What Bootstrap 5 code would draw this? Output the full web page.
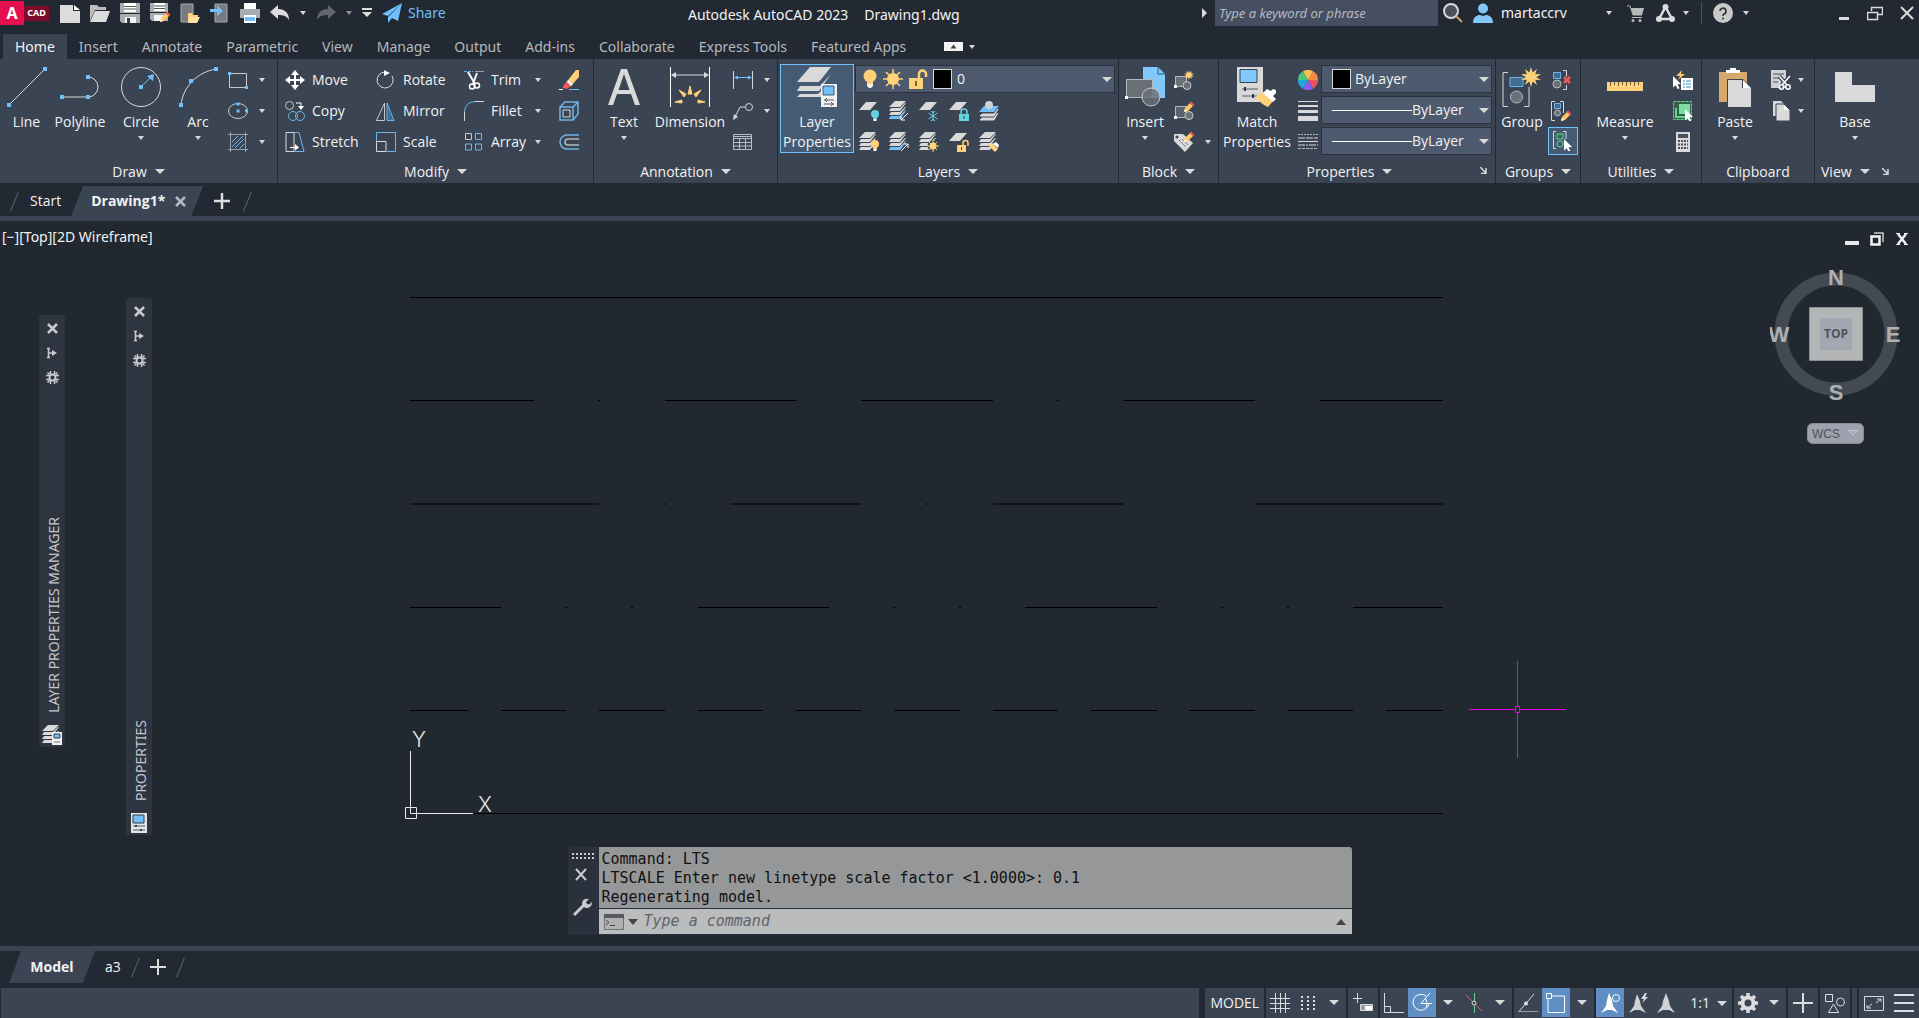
<!DOCTYPE html>
<html lang="en">
<head>
<meta charset="utf-8">
<meta name="viewport" content="width=device-width, initial-scale=1">
<title>Autodesk AutoCAD 2023 - Drawing1.dwg</title>
<link rel="stylesheet" href="https://cdn.jsdelivr.net/npm/bootstrap@5.3.0/dist/css/bootstrap.min.css">
<style>
:root{--ink:#222933;--sheet:#212830;--panel:#3b4453;--field:#4d5a6e;--edge:#2a323f;--hi:#6fc0fb;--on:#5f8fc3}
body{background:var(--ink);color:#f2f2f2;font:14px/20px "Open Sans","Noto Sans",sans-serif;overflow:hidden}
svg{display:block;flex:none}
.s20{width:20px;height:20px}.s40{width:40px;height:40px}
.plain{color:inherit;font-size:14px;line-height:20px;padding:0;border:0;border-radius:0;background:none;white-space:nowrap}
.plain:hover{color:#fff}
.tri{width:0;height:0;border:3px solid transparent;border-top:4px solid #d9d9d9;border-bottom:0;flex:none}
.tri.wide{border-left-width:5px;border-right-width:5px;border-top-width:5px}
.tri.dim{border-top-color:#8b8f96}
.top-row,.menu-row,.view-tag,.dock{font-family:"Noto Sans","Open Sans",sans-serif}
.top-row{height:34px}
.top-row .bar-in{height:26px}
.logo-a{width:24px;height:24px;background:#e51050;font-weight:700;font-size:16px;line-height:20px}
.logo-cad{height:15px;width:25px;background:#7c0b2c;font-size:9px;font-weight:700}
.quick{gap:10px;padding-left:11px}
.share{gap:6px;color:var(--hi)}
.doc-title{gap:16px}
.find{width:223px;height:26px;background:#454f61;border:0;color:#d0d2d6;font-style:italic;font-size:13px;padding:0 4px}
.find::placeholder{color:#b5b9c0}
.who{width:105px}
.i-user{margin:0 8px 0 10px}
.i-cart{margin:0 12px 0 15px}
.split{width:1px;height:22px;background:#4a5364;margin:0 11px 0 12px}
.help-tri{margin:0 90px 0 10px}
.i-restore{margin:0 17px 0 18px}
.i-close{margin-right:5px}
.menu-row{height:25px;padding-left:3px}
.menu-row a{color:#b5b8bd;text-decoration:none;padding:0 12px;height:25px;line-height:25px}
.menu-row a.on{background:var(--panel);color:#f2f2f2}
.i-fold{margin:0 6px 0 26px}
.ribbon{background:var(--panel);height:124px}
.pane{border-right:1px solid var(--ink);flex:none}
.pane:last-child{border:0;flex:1}
.tools{display:grid;grid-auto-flow:column;grid-template-rows:repeat(3,31px);padding-top:5px}
.pane-name{height:26px;padding-top:3px}
.pane-left{padding-left:6px}
.big{grid-row:1/span 3;display:flex;flex-direction:column;align-items:center;padding-top:3px}
.big svg{margin-bottom:5px}
.big .tri{margin-top:4px}
.big .combo svg,.big .lay-row svg{margin-bottom:0}
.big .combo .tri{margin-top:0}
.big.on{height:89px;width:74px;margin-left:2px;padding-top:2px;background:#455b74;border:1px solid var(--hi)}
.sm{display:flex;align-items:center;gap:7px;padding-left:7px;height:31px}
.sm.near{padding-left:3px}
.sm.mid{padding-left:0;justify-content:center}
.sm .end{margin-left:auto;margin-right:11px}
.sm.on{width:30px;height:28px;margin:1px 0 0 1px;background:#455b74;border:1px solid var(--hi)}
.t-draw{grid-template-columns:53px 54px 68px 46px 56px}
.t-modify{grid-template-columns:91px 88px 95px 41px}
.t-annot{grid-template-columns:60px 72px 51px}
.t-layers{grid-template-columns:77px 263px}
.t-block{grid-template-columns:52px 47px}
.t-props{grid-template-columns:76px 26px 174px}
.t-groups{grid-template-columns:52px 32px}
.t-util{grid-template-columns:88px 32px}
.t-util .sm{width:28px}
.t-clip{grid-template-columns:66px 46px}
.t-view{grid-template-columns:80px}
.combo{height:28px;margin:1px 3px 2px 0;background:var(--field);border:1px solid var(--edge);padding:0 2px 0 6px}
.combo select{appearance:none;background:none;border:0;color:#f2f2f2;flex:1;min-width:0;padding:0;outline:0}
.combo option{color:#000}
.combo.icons{gap:5px}
.swatch{width:19px;height:20px;background:#000;border:1px solid #d9d9d9;flex:none}
.rule{width:80px;height:1px;background:#fff;flex:none}
.lay-row{height:31px;gap:10px;padding-left:4px}
.file-row{height:33px}
.file-part{height:30px;padding-left:14px}
.file-part a{padding:0 10px 0 15px}
.file-add{height:30px;padding-left:11px;gap:17px}
.slash{width:1px;height:21px;background:#59606c;transform:rotate(22deg)}
.file-tab{height:30px;width:132px;background:var(--panel);clip-path:polygon(9% 0,100% 0,91% 100%,0 100%);font-weight:700;padding-left:20px;gap:10px}
.strip{height:5px;background:var(--panel)}
.board{background:var(--sheet);min-height:0}
.board-svg{left:0;top:0;width:100%;height:100%}
.view-tag{left:2px;top:6px;font-size:14px;line-height:20px}
.dock{width:26px;background:#2e3440;border-radius:3px;color:#c3c6cb}
.dock-a{left:39px;top:94px;height:432px}
.dock-b{left:126px;top:77px;height:537px}
.dock .gl{gap:11px;padding-top:6px}
.dock .nm{writing-mode:vertical-rl;transform:rotate(180deg);line-height:20px;margin:auto 0 12px 3px}
.dock>svg{margin-bottom:2px}
.board-ctl{right:10px;top:11px;gap:11px}
.cube{right:17px;top:44px;width:132px;height:182px}
.cli{left:50%;bottom:11px;width:784px;margin-left:-392px;padding-bottom:1px;background:#2a303c;border-radius:3px}
.cli-side{width:31px;padding:6px 0 0 4px}
.cli-text{font:15px/19px "DejaVu Sans Mono",monospace;color:#111}
.cli-log{background:#969798;height:61px;padding:3px 3px 1px;border-top-right-radius:3px}
.cli-in{background:#bbbcbe;height:25px;margin-top:1px;padding:0 6px 0 5px}
.cli-in input{background:none;border:0;outline:0;font:italic 15px/19px "DejaVu Sans Mono",monospace;padding:0;margin-left:6px}
.cli-in input::placeholder{color:#626468}
.sheet-row{height:37px}
.sheet-tab{width:86px;height:32px;margin-left:9px;background:var(--panel);clip-path:polygon(14% 0,100% 0,86% 100%,0 100%);font-weight:700}
.sheet-part{height:32px;padding-left:10px;gap:14px}
.status{height:30px;gap:2px;padding-left:1px}
.seg{background:var(--panel)}
.seg.model{width:59px}
.seg.sliver{width:5px}
.scale{padding:0 5px 0 10px;gap:7px}
.st{width:28px;height:29px;display:flex;align-items:center;justify-content:center}
.st.on{background:var(--on)}
.st.car{width:24px}
.st.lone{width:30px;height:30px}
</style>
</head>
<body class="d-flex flex-column vh-100">

<svg width="0" height="0" class="position-absolute" aria-hidden="true">
 <defs>
  <g id="stack" fill="#d9d9d9"><path d="M6 0h11l-6 6H0z"/><path d="M2 7h9l5-5h1l-6 8H0z"/><path d="M2 11h9l5-5h1l-6 8H0z"/><path d="M2 15h9l4-4h1l-5 7H0z"/></g>
  <g id="leaf"><path d="M7 1h11l-7 8H0z" fill="#d9d9d9"/></g>
  <g id="bulb"><circle cx="4" cy="4" r="4"/><path d="M2 7h4v2H2z"/><path d="M2.500 9h3v2h-3z" fill="#fff"/></g>
  <g id="burst"><path d="M10 0l1.700 5.500L16 2l-1.800 5.200L20 7l-4.700 3.200L20 13l-5.800-.2L16 18l-4.300-3.500L10 20l-1.700-5.500L4 18l1.800-5.200L0 13l4.700-2.800L0 7l5.800.2L4 2l4.300 3.500z" fill="#ffd279"/></g>
  <g id="pencil"><path d="M0 9l1-4 5-5 3 3-5 5z" fill="#ffc766"/><path d="M6 0l1-1 3 3-1 1z" fill="#f0565a" stroke="#f0565a"/><path d="M0 9l1-3 2 2z" fill="#fff"/></g>
  <g id="arrow"><path d="M0 0l8 8-3.500.3 2 4-1.800.9-2-4L0 11.500z" fill="#fff"/></g>
  <g id="gearsm" fill="none" stroke="#c9cbd0"><circle cx="6.500" cy="6.500" r="3" stroke-width="2"/><path d="M4.500 0v3M8.500 0v3M4.500 10v3M8.500 10v3M0 4.500h3M0 8.500h3M10 4.500h3M10 8.500h3M1.500 1.500l2 2M9.500 9.500l2 2M11.500 1.500l-2 2M3.500 9.500l-2 2" stroke-width="1.500"/></g>
  <g id="sheetprop"><path d="M0 0h16v20H0z" fill="#e4e4e4"/><path d="M2 2h11v8H2z" fill="#6fc0fb" stroke="#333b48"/><path d="M2 13h12M2 17h12" stroke="#555c68"/><path d="M5 12v2M10 16v2" stroke="#333b48" stroke-width="2"/></g>
 </defs>
</svg>

<header class="top-row">
 <div class="bar-in d-flex align-items-center">
  <button class="btn plain d-flex align-items-center" aria-label="Application menu"><span class="logo-a d-flex align-items-center justify-content-center text-white">A</span><span class="logo-cad d-flex align-items-center justify-content-center text-white">CAD</span></button>
  <nav class="quick d-flex align-items-center" aria-label="Quick access">
   <svg class="s20" viewBox="0 0 20 20"><path d="M0 2h13v6h7v12H0z" fill="#dcdcdc"/><path d="M14 2l6 5h-6z" fill="#fff"/></svg>
   <svg class="s20" viewBox="0 0 20 20"><path d="M0 2h7l2 2h7v3H5L0 18z" fill="#bdbdbd"/><path d="M5 8h15l-4 11H0z" fill="#dcdcdc"/></svg>
   <svg class="s20" viewBox="0 0 20 20"><path d="M0 0h20v20H2l-2-2z" fill="#a9acb1"/><path d="M4 0h12v9H4z" fill="#fff"/><path d="M4 3.500h12M4 6h12" stroke="#555"/><path d="M0 10.500h20" stroke="#222933"/><path d="M5 14h11v6H5z" fill="#f4f4f4"/><path d="M7 15h3v5H7z" fill="#333b48"/></svg>
   <svg class="s20" viewBox="0 0 20 20"><path d="M0 0h18v18H2l-2-2z" fill="#a9acb1"/><path d="M4 0h11v8H4z" fill="#fff"/><path d="M4 3h11M4 5.500h11" stroke="#555"/><path d="M0 9.500h18" stroke="#222933"/><path d="M4 12h9v6H4z" fill="#f4f4f4"/><use href="#pencil" x="10" y="10"/></svg>
   <svg class="s20" viewBox="0 0 20 20"><path d="M1 1h12v18H1z" fill="#777b80" stroke="#a9acb1"/><path d="M8 10h4l1 2h5v7H8z" fill="#ffd279"/><path d="M10 14h10l-3 6H8z" fill="#ffe1a0"/></svg>
   <svg class="s20" viewBox="0 0 20 20"><path d="M5 1h12v18H5z" fill="#777b80" stroke="#a9acb1"/><path d="M0 6h7V2l6 6-6 5V9H0z" fill="#6fc0fb"/></svg>
   <svg class="s20" viewBox="0 0 20 20"><path d="M4 0h12v7H4z" fill="#fff"/><path d="M0 6h20v9H0z" fill="#a9acb1"/><path d="M4 12h12v8H4z" fill="#fff"/><path d="M5 14h10v4H5z" fill="#6fc0fb"/></svg>
   <svg class="s20" viewBox="0 0 20 20"><path d="M0 9l8-7v4c7 0 11 4 11 11-2-4-6-5-11-5v4z" fill="#dcdcdc"/></svg>
   <span class="tri"></span>
   <svg class="s20" viewBox="0 0 20 20"><path d="M20 9l-8-7v4C5 6 1 10 1 17c2-4 6-5 11-5v4z" fill="#62676e"/></svg>
   <span class="tri dim"></span>
   <svg width="10" height="14" viewBox="0 0 10 14"><path d="M0 3h10" stroke="#dcdcdc" stroke-width="2"/><path d="M0 6h10l-5 5z" fill="#dcdcdc"/></svg>
   <button class="btn plain share d-flex align-items-center"><svg class="s20" viewBox="0 0 20 20"><path d="M20 0L0 11l6 2zM20 0L8 14l8 4zM20 0L6 14v6l4-5z" fill="#6fc0fb"/></svg>Share</button>
  </nav>
  <div class="doc-title mx-auto d-flex pt-1"><span>Autodesk AutoCAD 2023</span><span>Drawing1.dwg</span></div>
  <div class="d-flex align-items-center">
   <svg width="5" height="10" viewBox="0 0 5 10" class="me-2"><path d="M0 0l5 5-5 5z" fill="#dcdcdc"/></svg>
   <input class="find" type="search" placeholder="Type a keyword or phrase" aria-label="Type a keyword or phrase">
   <svg class="ms-1" width="21" height="20" viewBox="0 0 21 20"><circle cx="9" cy="8" r="7" fill="#4a515c" stroke="#d9d9d9" stroke-width="2"/><path d="M14 13l6 6" stroke="#c9a070" stroke-width="2"/></svg>
   <svg class="s20 i-user" viewBox="0 0 20 20"><circle cx="10" cy="5.500" r="5" fill="#82c8fb"/><path d="M0 20c0-6 4-8 7-8l3 1 3-1c3 0 7 2 7 8z" fill="#82c8fb"/></svg>
   <span class="who">martaccrv</span><span class="tri"></span>
   <svg class="i-cart" width="17" height="17" viewBox="0 0 17 17"><path d="M0 1h3l3 9h9" fill="none" stroke="#b9b9b9"/><path d="M4 3h13l-2 7H6z" fill="#b9b9b9"/><path d="M5 12.500h10" stroke="#b9b9b9"/><circle cx="6" cy="15.500" r="1.500" fill="#b9b9b9"/><circle cx="13" cy="15.500" r="1.500" fill="#b9b9b9"/></svg>
   <svg width="19" height="18" viewBox="0 0 19 18"><path d="M9.500 3L3 15h13z" fill="none" stroke="#dcdcdc" stroke-width="2.500"/><g fill="#dcdcdc"><circle cx="9.500" cy="3" r="3"/><circle cx="3" cy="15" r="3"/><circle cx="16" cy="15" r="3"/></g></svg>
   <span class="tri ms-2"></span>
   <span class="split"></span>
   <svg class="s20" viewBox="0 0 20 20"><circle cx="10" cy="10" r="10" fill="#c9c9c9"/><path d="M7 8a3 3 0 1 1 4 3q-1 .5-1 2M10 14.500v2" fill="none" stroke="#333" stroke-width="1.600"/></svg>
   <span class="tri help-tri"></span>
   <svg width="10" height="14" viewBox="0 0 10 14"><path d="M0 11h10v3H0z" fill="#dcdcdc"/></svg>
   <svg class="i-restore" width="16" height="15" viewBox="0 0 16 15"><path d="M4.500 5V1.500h11v7H11M.5 6.500h10v7H.5z" fill="none" stroke="#dcdcdc" stroke-width="1.500"/></svg>
   <svg class="i-close" width="14" height="14" viewBox="0 0 14 14"><path d="M1 1l12 12M13 1L1 13" stroke="#dcdcdc" stroke-width="2"/></svg>
  </div>
 </div>
</header>

<nav class="menu-row d-flex align-items-center" aria-label="Ribbon tabs">
 <a class="on" href="#">Home</a><a href="#">Insert</a><a href="#">Annotate</a><a href="#">Parametric</a><a href="#">View</a><a href="#">Manage</a><a href="#">Output</a><a href="#">Add-ins</a><a href="#">Collaborate</a><a href="#">Express Tools</a><a href="#">Featured Apps</a>
 <svg class="i-fold" width="19" height="9" viewBox="0 0 19 9"><path d="M0 0h19v9H0z" fill="#f4f4f4"/><path d="M6.500 6.500h6l-3-4z" fill="#444"/></svg><span class="tri"></span>
</nav>

<section class="ribbon d-flex">
 <div class="pane">
  <div class="tools t-draw">
   <button class="btn plain big"><svg class="s40" viewBox="0 0 40 40"><path d="M2 38L38 2" stroke="#d9d9d9"/><path d="M0 36h4v4H0zM36 0h4v4h-4z" fill="#6fc0fb"/></svg>Line</button>
   <button class="btn plain big"><svg class="s40" viewBox="0 0 40 40"><path d="M2 30h26a10 10 0 0 0 0-20" fill="none" stroke="#d9d9d9"/><path d="M0 28h4v4H0zM26 28h4v4h-4zM26 8h4v4h-4z" fill="#6fc0fb"/></svg>Polyline</button>
   <button class="btn plain big"><svg class="s40" viewBox="0 0 40 40"><circle cx="20" cy="20" r="19.500" fill="none" stroke="#d9d9d9"/><path d="M20 20l11-11" stroke="#6fc0fb"/><path d="M18 18h4v4h-4zM33 7l-1 7-6-5z" fill="#6fc0fb"/></svg>Circle<span class="tri"></span></button>
   <button class="btn plain big"><svg class="s40" viewBox="0 0 40 40"><path d="M3 38C5 19 20 5 38 2" fill="none" stroke="#d9d9d9"/><path d="M1 36h4v4H1zM11 12h4v4h-4zM36 0h4v4h-4z" fill="#6fc0fb"/></svg>Arc<span class="tri"></span></button>
   <button class="btn plain sm" aria-label="Rectangle"><svg class="s20" viewBox="0 0 20 20"><path d="M1 3.500h17.500v14H1.500V3" fill="none" stroke="#c9c9c9"/><path d="M0 2h3v3H0zM17 16h3v3h-3z" fill="#6fc0fb"/></svg><span class="tri ms-1"></span></button>
   <button class="btn plain sm" aria-label="Ellipse"><svg class="s20" viewBox="0 0 20 20"><ellipse cx="10" cy="10" rx="9.500" ry="7.500" fill="none" stroke="#c9c9c9"/><path d="M8.500 1.500h3v3h-3zM8.500 8.500h3v3h-3zM17 8.500h3v3h-3z" fill="#6fc0fb"/></svg><span class="tri ms-1"></span></button>
   <button class="btn plain sm" aria-label="Hatch"><svg class="s20" viewBox="0 0 20 20"><path d="M2.500 0v20M17.500 0v20M0 2.500h20M0 17.500h20" stroke="#9ba1aa"/><path d="M4 10l6-6M4 15L15 4M7 16l9-9M12 16l4-4" stroke="#6fc0fb"/></svg><span class="tri ms-1"></span></button>
  </div>
  <button class="btn plain pane-name w-100 d-flex justify-content-center align-items-center gap-2">Draw <span class="tri wide"></span></button>
 </div>

 <div class="pane">
  <div class="tools t-modify">
   <button class="btn plain sm"><svg class="s20" viewBox="0 0 20 20"><path d="M10 2v16M2 10h16" stroke="#fff" stroke-width="2"/><path d="M10 0l4 5H6zM10 20l4-5H6zM0 10l5-4v8zM20 10l-5-4v8z" fill="#fff"/></svg>Move</button>
   <button class="btn plain sm"><svg class="s20" viewBox="0 0 20 20"><circle cx="4.500" cy="4.500" r="4" fill="none" stroke="#c9c9c9"/><circle cx="8" cy="15" r="4.500" fill="none" stroke="#6fb4e6"/><circle cx="15" cy="15" r="4.500" fill="none" stroke="#6fb4e6"/><path d="M11 2h5v5" fill="none" stroke="#fff"/><path d="M13 5h6l-3 4z" fill="#fff"/></svg>Copy</button>
   <button class="btn plain sm"><svg class="s20" viewBox="0 0 20 20"><path d="M1 .5h8v19H1z" fill="none" stroke="#d9d9d9"/><path d="M9 .5h5l5 19H9" fill="none" stroke="#6fb4e6"/><path d="M5 15.500h6" stroke="#fff"/><path d="M10 12l4 3.500-4 3z" fill="#fff"/></svg>Stretch</button>
   <button class="btn plain sm"><svg class="s20" viewBox="0 0 20 20"><path d="M16 6a8 8 0 1 1-7-4" fill="none" stroke="#d9d9d9"/><path d="M8 0l6 3-6 3z" fill="#fff"/></svg>Rotate</button>
   <button class="btn plain sm"><svg class="s20" viewBox="0 0 20 20"><path d="M8.500 2v17.500H.5z" fill="none" stroke="#c9c9c9"/><path d="M11 2v17.500H18z" fill="#3f6d92" stroke="#6fb4e6"/></svg>Mirror</button>
   <button class="btn plain sm"><svg class="s20" viewBox="0 0 20 20"><path d="M.5 9V.5h19v19H11" fill="none" stroke="#6fb4e6"/><path d="M.5 9.500h9.500v10H.5z" fill="none" stroke="#d9d9d9"/></svg>Scale</button>
   <button class="btn plain sm"><svg class="s20" viewBox="0 0 20 20"><path d="M0 1.500h9" stroke="#6fb4e6" stroke-dasharray="3 1"/><path d="M11 1.500h9" stroke="#9ba1aa"/><path d="M4 2l7 12M13 3L9 14" stroke="#fff" stroke-width="2"/><circle cx="8" cy="16.500" r="2.500" fill="none" stroke="#fff" stroke-width="1.500"/><circle cx="13" cy="15.500" r="2.500" fill="none" stroke="#fff" stroke-width="1.500"/></svg>Trim<span class="tri end"></span></button>
   <button class="btn plain sm"><svg class="s20" viewBox="0 0 20 20"><path d="M.5 20v-9" stroke="#d9d9d9"/><path d="M.5 11Q1 1 11 .5" fill="none" stroke="#6fb4e6"/><path d="M11 .5h9" stroke="#d9d9d9"/></svg>Fillet<span class="tri end"></span></button>
   <button class="btn plain sm"><svg class="s20" viewBox="0 0 20 20"><path d="M1.500 1.500h6v6h-6z" fill="none" stroke="#c9c9c9"/><path d="M11.500 1.500h6v6h-6zM1.500 12h6v6h-6zM11.500 12h6v6h-6z" fill="none" stroke="#6fb4e6"/></svg>Array<span class="tri end"></span></button>
   <button class="btn plain sm" aria-label="Erase"><svg class="s20" viewBox="0 0 20 20"><path d="M20 0v7l-9 10-5-3L17 0z" fill="#ffd279"/><path d="M8 11l5 4-5 4-4-1v-2z" fill="#f0565a"/><path d="M9 10l5 4-2 2-4-4z" fill="#fff"/><path d="M0 19.500h4" stroke="#fff"/><path d="M10 19.500h10" stroke="#6fc0fb"/></svg></button>
   <button class="btn plain sm" aria-label="Solid edit"><svg class="s20" viewBox="0 0 20 20"><path d="M1 6h13v13H1zM1 6l5-5h13l-5 5M19 1v12l-5 6" fill="none" stroke="#6fb4e6" stroke-width="1.500"/><path d="M4 9h7v7H4z" fill="none" stroke="#d9d9d9"/></svg></button>
   <button class="btn plain sm" aria-label="Offset"><svg class="s20" viewBox="0 0 20 20"><path d="M20 3H8a7 7 0 0 0 0 14h12" fill="none" stroke="#6fb4e6" stroke-width="1.500"/><path d="M20 7H9a3 3 0 0 0 0 6h11" fill="none" stroke="#b5b8bd" stroke-width="1.500"/></svg></button>
  </div>
  <button class="btn plain pane-name w-100 d-flex justify-content-center align-items-center gap-2">Modify <span class="tri wide"></span></button>
 </div>

 <div class="pane">
  <div class="tools t-annot">
   <button class="btn plain big"><svg class="s40" viewBox="0 0 40 40"><path d="M4 38L17 2h6l13 36h-5l-4-11H13L9 38zM14.500 23h11L20 7z" fill="#d9d9d9"/></svg>Text<span class="tri"></span></button>
   <button class="btn plain big"><svg class="s40" viewBox="0 0 40 40"><path d="M.5 0v40M39.500 0v40" stroke="#fff"/><path d="M2 8h36" stroke="#d9d9d9"/><path d="M1 8l5-3v6zM39 8l-5-3v6z" fill="#d9d9d9"/><g fill="#ffd279"><path d="M18 27l2-8 2 8zM14 30l-5-7 7 4zM26 30l5-7-7 4zM12 36l-7-1 7-2zM28 36l7-1-7-2z" stroke="#ffd279"/></g></svg>Dimension</button>
   <button class="btn plain sm" aria-label="Linear"><svg class="s20" viewBox="0 0 20 20"><path d="M.5 1v18M19.500 1v18" stroke="#d9d9d9"/><path d="M2 7.500h16" stroke="#6fc0fb"/><path d="M1 7.500l4-2v4zM19 7.500l-4-2v4z" fill="#6fc0fb"/></svg><span class="tri ms-1"></span></button>
   <button class="btn plain sm" aria-label="Leader"><svg class="s20" viewBox="0 0 20 20"><path d="M2 16L7 6h5" fill="none" stroke="#d9d9d9"/><circle cx="16" cy="6" r="3.500" fill="none" stroke="#d9d9d9"/><path d="M0 19l1-6 4 3z" fill="#d9d9d9"/></svg><span class="tri ms-1"></span></button>
   <button class="btn plain sm" aria-label="Table"><svg class="s20" viewBox="0 0 20 20"><path d="M.5 2.500h18v15H.5zM1 4.500h18M1 6.500h17M1 10.500h17M1 14h17M6.500 7v10M12.500 7v10" fill="none" stroke="#b9bcc2"/></svg></button>
  </div>
  <button class="btn plain pane-name w-100 d-flex justify-content-center align-items-center gap-2">Annotation <span class="tri wide"></span></button>
 </div>

 <div class="pane">
  <div class="tools t-layers">
   <button class="btn plain big on"><svg class="s40" viewBox="0 0 40 40"><path d="M13 0h21L22 15H0z" fill="#d9d9d9"/><path d="M3 19h20l11-12-12 17H0zM3 27h18l3-3v6H0z" fill="#d9d9d9"/><path d="M2 16.500h20L34 4" fill="none" stroke="#455b74" stroke-width="2"/><path d="M2 24.500h20" stroke="#455b74"/><path d="M24 17h16v23H24z" fill="#f2f2f2"/><path d="M26 19h11v9H26z" fill="#6fc0fb" stroke="#455b74"/><path d="M27 33h10M27 37h10" stroke="#555c68"/><path d="M30 31l-2 2 2 2M34 35l2 2-2 2" stroke="#555c68" fill="none"/></svg>Layer<br>Properties</button>
   <div class="big align-items-stretch p-0">
    <div class="combo icons d-flex align-items-center">
     <svg width="16" height="20" viewBox="0 0 16 20"><circle cx="8" cy="7" r="6.500" fill="#ffd279"/><path d="M5 12h6v3H5z" fill="#ffd279"/><path d="M5 15h6v2l-2 2H7l-2-2z" fill="#f2f2f2"/></svg>
     <svg class="s20" viewBox="0 0 20 20"><circle cx="10" cy="10" r="6" fill="#ffd279"/><path d="M10 0v20M0 10h20M3 3l14 14M17 3L3 17" stroke="#ffd279" stroke-width="1.500"/></svg>
     <svg class="s20" viewBox="0 0 20 20"><path d="M1 9h14v11H1z" fill="#ffd279"/><path d="M11 9V5a3.500 3.500 0 0 1 7 0v3" fill="none" stroke="#ffd279" stroke-width="2.500"/><path d="M8 12v5" stroke="#7a6433" stroke-width="2"/></svg>
     <span class="swatch"></span>
     <select aria-label="Layer"><option>0</option></select><span class="tri wide"></span>
    </div>
    <div class="lay-row d-flex align-items-center">
     <svg class="s20" viewBox="0 0 20 20"><use href="#leaf"/><use href="#bulb" x="12" y="9" fill="#63d3e0"/></svg>
     <svg class="s20" viewBox="0 0 20 20"><use href="#stack"/><path d="M2 15h9l5-6h1l-6 9H0z" fill="#6fc0fb"/><path d="M19 12l-7 7M12 15v4h4" stroke="#fff" fill="none"/></svg>
     <svg class="s20" viewBox="0 0 20 20"><use href="#leaf"/><path d="M14 10v10M9.500 12l9 6M18.500 12l-9 6M12 10l2 2 2-2M12 20l2-2 2 2" stroke="#63d3e0" fill="none"/></svg>
     <svg class="s20" viewBox="0 0 20 20"><use href="#leaf"/><path d="M10 13h10v7H10z" fill="#63d3e0"/><path d="M12 13v-2a3 3 0 0 1 6 0v2" fill="none" stroke="#63d3e0" stroke-width="1.500"/><path d="M15 15v3" stroke="#245"/></svg>
     <svg class="s20" viewBox="0 0 20 20"><path d="M5 5h15l-5 6H0z" fill="#6fc0fb"/><path d="M3 13h12l4-5-4 7H1zM3 17h12l4-5-4 7H1z" fill="#d9d9d9" stroke="#d9d9d9"/><circle cx="10" cy="4" r="4" fill="#d0d2d5"/></svg>
    </div>
    <div class="lay-row d-flex align-items-center">
     <svg class="s20" viewBox="0 0 20 20"><use href="#stack"/><use href="#bulb" x="12" y="8" fill="#ffd279"/></svg>
     <svg class="s20" viewBox="0 0 20 20"><use href="#stack"/><path d="M2 15h9l5-6h1l-6 9H0z" fill="#6fc0fb"/><path d="M12 19l7-7M15 12h4v4" stroke="#fff" fill="none"/></svg>
     <svg class="s20" viewBox="0 0 20 20"><use href="#stack"/><circle cx="14" cy="14" r="5.500" fill="#3b4453"/><circle cx="14" cy="14" r="3.500" fill="#ffd279"/><path d="M14 8v12M8 14h12M10 10l8 8M18 10l-8 8" stroke="#ffd279"/></svg>
     <svg class="s20" viewBox="0 0 20 20"><use href="#leaf"/><path d="M8 13h9v7H8z" fill="#ffd279"/><path d="M14 13v-2a2.500 2.500 0 0 1 5 0v3" fill="none" stroke="#ffd279" stroke-width="1.500"/><path d="M12.500 15v3" stroke="#543"/></svg>
     <svg class="s20" viewBox="0 0 20 20"><use href="#stack"/><path d="M9 13l4-2 6 6-3 3z" fill="#ffd279"/><path d="M14 12l3-2 3 3-1 3z" fill="#fff"/></svg>
    </div>
   </div>
  </div>
  <button class="btn plain pane-name w-100 d-flex justify-content-center align-items-center gap-2">Layers <span class="tri wide"></span></button>
 </div>

 <div class="pane">
  <div class="tools t-block">
   <button class="btn plain big"><svg class="s40" viewBox="0 0 40 40"><path d="M18 0h15l7 7v24H18z" fill="#82c8fb"/><path d="M33 0v7h7" fill="none" stroke="#2f5d85"/><path d="M1.500 12.500h26v18h-26z" fill="#6b7078" stroke="#b5b8bd"/><circle cx="26" cy="30" r="9" fill="#6b7078" fill-opacity=".8" stroke="#c9c9c9"/><path d="M0 29h3v3H0z" fill="#fff"/></svg>Insert<span class="tri"></span></button>
   <button class="btn plain sm near" aria-label="Create block"><svg class="s20" viewBox="0 0 20 20"><path d="M1.500 6.500h11v10h-11z" fill="#6b7078" stroke="#b5b8bd"/><circle cx="13" cy="15.500" r="4" fill="#6b7078" stroke="#c9c9c9"/><path d="M0 15h3v3H0z" fill="#fff"/><svg x="10" y="0" width="10" height="10" viewBox="0 0 20 20"><use href="#burst"/></svg></svg></button>
   <button class="btn plain sm near" aria-label="Edit block"><svg class="s20" viewBox="0 0 20 20"><path d="M1.500 5.500h11v11h-11z" fill="#5c626c" stroke="#b5b8bd"/><circle cx="15" cy="14.500" r="4" fill="#6b7078" stroke="#c9c9c9"/><path d="M0 15h3v3H0z" fill="#fff"/><use href="#pencil" x="10" y="2"/></svg></button>
   <button class="btn plain sm near" aria-label="Edit attributes"><svg class="s20" viewBox="0 0 20 20"><path d="M0 2h9l10 9-8 9L0 9z" fill="#d9d9d9"/><circle cx="3" cy="5" r="1.500" fill="#3b4453"/><path d="M5 8l7 7M8 7l6 6" stroke="#555c68" stroke-dasharray="2 1"/><use href="#pencil" x="10" y="1"/></svg><span class="tri ms-1"></span></button>
  </div>
  <button class="btn plain pane-name w-100 d-flex justify-content-center align-items-center gap-2">Block <span class="tri wide"></span></button>
 </div>

 <div class="pane">
  <div class="tools t-props">
   <button class="btn plain big"><svg class="s40" viewBox="0 0 40 40"><path d="M0 0h26v35H0z" fill="#d9d9d9"/><path d="M3 2.500h17v13H3z" fill="#82c8fb" stroke="#39424f"/><path d="M5 22h16M5 29h16" stroke="#555c68"/><path d="M8 20v4M16 27v4" stroke="#333b48" stroke-width="2"/><path d="M19 29l8-4 9 9-5 6q-8-3-12-11z" fill="#ffd279"/><path d="M26 26l4-4 4 2 2-2 3 1v3l-3 3 3 3-3 3z" fill="#fff"/></svg>Match<br>Properties</button>
   <button class="btn plain sm near" aria-label="Colour"><svg class="s20" viewBox="0 0 20 20"><path d="M10 10L5 1.300a10 10 0 0 1 10 0z" fill="#ffc04d"/><path d="M10 10l5-8.700A10 10 0 0 1 20 10z" fill="#f58a4b"/><path d="M10 10h10a10 10 0 0 1-5 8.700z" fill="#e5565b"/><path d="M10 10l5 8.700a10 10 0 0 1-10 0z" fill="#8b5cf6"/><path d="M10 10L5 18.700A10 10 0 0 1 0 10z" fill="#1fa8d8"/><path d="M10 10H0a10 10 0 0 1 5-8.700z" fill="#4fc47a"/></svg></button>
   <button class="btn plain sm near" aria-label="Lineweight"><svg class="s20" viewBox="0 0 20 20"><path d="M0 0h20v1H0zM0 4h20v2H0zM0 9h20v3H0zM0 15h20v5H0z" fill="#d9d9d9"/></svg></button>
   <button class="btn plain sm near" aria-label="Linetype"><svg class="s20" viewBox="0 0 20 20"><path d="M0 2.500h20" stroke="#b5b8bd" stroke-dasharray="2 1"/><path d="M0 6h20" stroke="#d9d9d9" stroke-dasharray="7 1"/><path d="M0 9.500h20" stroke="#d9d9d9"/><path d="M0 13h20" stroke="#d9d9d9" stroke-dasharray="7 1 2 1"/><path d="M0 16.500h20" stroke="#b5b8bd" stroke-dasharray="3 1"/></svg></button>
   <div class="combo d-flex align-items-center gap-1"><span class="swatch ms-1"></span><select aria-label="Object colour"><option>ByLayer</option></select><span class="tri wide"></span></div>
   <div class="combo d-flex align-items-center"><span class="rule ms-1"></span><select aria-label="Object lineweight"><option>ByLayer</option></select><span class="tri wide"></span></div>
   <div class="combo d-flex align-items-center"><span class="rule ms-1"></span><select aria-label="Object linetype"><option>ByLayer</option></select><span class="tri wide"></span></div>
  </div>
  <div class="d-flex align-items-center">
   <button class="btn plain pane-name flex-grow-1 d-flex justify-content-center align-items-center gap-2">Properties <span class="tri wide"></span></button>
   <svg width="7" height="7" viewBox="0 0 7 7" class="me-2"><path d="M0 0l6 6M6 1v5.500H1" stroke="#d9d9d9" fill="none" stroke-width="1.500"/></svg>
  </div>
 </div>

 <div class="pane">
  <div class="tools t-groups">
   <button class="btn plain big"><svg class="s40" viewBox="0 0 40 40"><path d="M6 5.500H1v34h5M22 39.500h5V20" fill="none" stroke="#d9d9d9"/><path d="M8 10.500h13v9H8z" fill="#3f6d92" stroke="#6fb4e6"/><circle cx="14.500" cy="30" r="6" fill="#6b7078" stroke="#b5b8bd"/><use href="#burst" x="19"/></svg>Group</button>
   <button class="btn plain sm near" aria-label="Ungroup"><svg class="s20" viewBox="0 0 20 20"><path d="M2.500 2.500h7v6h-7z" fill="#3f6d92" stroke="#6fb4e6"/><circle cx="6" cy="14" r="4" fill="#6b7078" stroke="#b5b8bd"/><path d="M12 .5h3.500v6M15.500 15v4.500H12" fill="none" stroke="#d9d9d9"/><path d="M13 7l6 6M19 7l-6 6" stroke="#f0565a" stroke-width="2.500"/></svg></button>
   <button class="btn plain sm near" aria-label="Edit group"><svg class="s20" viewBox="0 0 20 20"><path d="M4 .5H.5v19H4M9 .5h3.500V12" fill="none" stroke="#d9d9d9"/><path d="M3.500 2.500h6v5h-6z" fill="#3f6d92" stroke="#6fb4e6"/><circle cx="6.500" cy="12" r="3" fill="#6b7078" stroke="#b5b8bd"/><use href="#pencil" x="10" y="11"/></svg></button>
   <button class="btn plain sm near on ms-0" aria-label="Group selection"><svg class="s20" viewBox="0 0 20 20"><path d="M4 .5H1.500v17H4M11 .5h3V8" fill="none" stroke="#d9d9d9"/><path d="M5 3h6v5H5z" fill="#2f6f55" stroke="#62d58c"/><circle cx="8" cy="13" r="3" fill="none" stroke="#62d58c"/><use href="#arrow" x="12" y="8"/></svg></button>
  </div>
  <button class="btn plain pane-name w-100 d-flex justify-content-center align-items-center gap-2">Groups <span class="tri wide"></span></button>
 </div>

 <div class="pane">
  <div class="tools t-util">
   <button class="btn plain big"><svg class="s40" viewBox="0 0 40 40"><path d="M2 15h36v9H2z" fill="#ffd279"/><path d="M5.500 15v4M9.500 15v3M13.500 15v4M17.500 15v3M21.500 15v4M25.500 15v3M29.500 15v4M33.500 15v3" stroke="#6b5a30"/></svg>Measure<span class="tri"></span></button>
   <button class="btn plain sm mid" aria-label="Quick select"><svg class="s20" viewBox="0 0 20 20"><path d="M9 0L3 6h4L5 10l7-6H8z" fill="#ffc766"/><path d="M8 8h12v12H8z" fill="#fff"/><path d="M10 11h2M10 14h2M10 17h2M13 11h5M13 14h5M13 17h5" stroke="#3b86c6"/><use href="#arrow" x="0" y="6"/></svg></button>
   <button class="btn plain sm mid" aria-label="Select all"><svg class="s20" viewBox="0 0 20 20"><path d="M.5 .5h18v18H.5z" fill="#35614c" stroke="#62d58c" stroke-dasharray="3 1"/><path d="M6 3h11v10H6z" fill="#7fdba2"/><path d="M3 7v9h10" fill="none" stroke="#62d58c" stroke-width="2"/><use href="#arrow" x="12" y="8"/></svg></button>
   <button class="btn plain sm mid" aria-label="Calculator"><svg class="s20" viewBox="0 0 20 20"><path d="M3 0h14v20H3z" fill="#d9d9d9"/><path d="M5 2h10v4H5z" fill="#4a515c"/><path d="M5 9h10M5 12.500h10M5 16h10" stroke="#4a515c" stroke-width="2" stroke-dasharray="2 1"/></svg></button>
  </div>
  <button class="btn plain pane-name w-100 d-flex justify-content-center align-items-center gap-2">Utilities <span class="tri wide"></span></button>
 </div>

 <div class="pane">
  <div class="tools t-clip">
   <button class="btn plain big"><svg class="s40" viewBox="0 0 40 40"><path d="M4 5h28v30H4z" fill="#d6a86c"/><path d="M11 6V3h4V1h6v2h4v3z" fill="#fff"/><path d="M12 12h16l8 9v19H12z" fill="#3b4453"/><path d="M13 13h14v8h9v19H13z" fill="#d9d9d9"/><path d="M28 13l8 8h-8z" fill="#fff"/></svg>Paste<span class="tri"></span></button>
   <button class="btn plain sm near" aria-label="Cut"><svg class="s20" viewBox="0 0 20 20"><path d="M0 0h15v18H0z" fill="#d0d2d5"/><path d="M2 4h11M2 8h7M2 12h5" stroke="#4a515c"/><path d="M8 6l9 10M19 6L9 17" stroke="#3b4453" stroke-width="4"/><path d="M8 6l8 9M19 6l-8 9" stroke="#fff" stroke-width="1.500"/><circle cx="10.500" cy="17" r="2.200" fill="none" stroke="#fff" stroke-width="1.500"/><circle cx="17" cy="17" r="2.200" fill="none" stroke="#fff" stroke-width="1.500"/></svg><span class="tri"></span></button>
   <button class="btn plain sm near" aria-label="Copy clip"><svg class="s20" viewBox="0 0 20 20"><path d="M2 0h8l3 3v12H2z" fill="#d9d9d9"/><path d="M5 3h8l6 6v11H5z" fill="#d9d9d9" stroke="#3b4453"/><path d="M13 4v5h5z" fill="#fff"/></svg><span class="tri"></span></button>
  </div>
  <div class="pane-name d-flex justify-content-center align-items-center">Clipboard</div>
 </div>

 <div class="pane">
  <div class="tools t-view">
   <button class="btn plain big"><svg class="s40" viewBox="0 0 40 40"><path d="M0 5h17v13h23v17H0z" fill="#d9d9d9"/></svg>Base<span class="tri"></span></button>
  </div>
  <div class="pane-name pane-left d-flex align-items-center gap-2">
   <button class="btn plain d-flex align-items-center gap-2">View <span class="tri wide"></span></button>
   <svg width="7" height="7" viewBox="0 0 7 7" class="ms-1"><path d="M0 0l6 6M6 1v5.500H1" stroke="#d9d9d9" fill="none" stroke-width="1.500"/></svg>
  </div>
 </div>
</section>

<nav class="file-row d-flex align-items-end" aria-label="Files">
 <div class="file-part d-flex align-items-center"><span class="slash"></span><a href="#" class="text-reset text-decoration-none">Start</a></div>
 <div class="file-tab d-flex align-items-center">Drawing1*<svg width="11" height="11" viewBox="0 0 11 11"><path d="M1 1l9 9M10 1l-9 9" stroke="#b5b8bd" stroke-width="2.500"/></svg></div>
 <div class="file-add d-flex align-items-center"><svg width="16" height="16" viewBox="0 0 16 16"><path d="M8 0v16M0 8h16" stroke="#dcdcdc" stroke-width="2.500"/></svg><span class="slash"></span></div>
</nav>
<div class="strip"></div>

<main class="board position-relative flex-grow-1 overflow-hidden">
 <svg class="board-svg position-absolute">
  <g stroke="#000">
   <path d="M410 76.500H1443"/>
   <path d="M410 179.500H534M598 179.500h2M665 179.500H796M861 179.500H993M1057 179.500h2M1124 179.500H1255M1320 179.500H1443"/>
   <path d="M410 283H599M664 283h2M730 283H861M926 283h2M993 283H1124M1188 283h2M1255 283H1443"/>
   <path d="M410 386.500H501M565 386.500h2M631 386.500h2M698 386.500H829M893 386.500h2M959 386.500h2M1025 386.500H1157M1221 386.500h2M1287 386.500h2M1353 386.500H1443"/>
   <path d="M410 489.500H468M501 489.500H566M599 489.500H665M698 489.500H763M796 489.500H861M894 489.500H960M993 489.500H1058M1091 489.500H1157M1189 489.500H1255M1288 489.500H1353M1386 489.500H1443"/>
   <path d="M410 592.500H1443"/>
  </g>
  <g fill="none" stroke="#e4e6e8"><path d="M410.500 530v62.500H473M405.500 586.500h11v11h-11z"/></g>
  <g fill="#e4e6e8" font-family="Inter, Open Sans, sans-serif" font-weight="300" font-size="21" text-anchor="middle"><text x="419" y="526">Y</text><text x="485" y="591">X</text></g>
  <g fill="none" stroke="#e800e8"><path d="M1517.500 440v46M1517.500 491v46M1469 488.500h46M1520 488.500h46M1515.500 485.500h4v6h-4z"/></g>
 </svg>

 <div class="view-tag position-absolute">[−][Top][2D Wireframe]</div>

 <aside class="dock dock-a position-absolute d-flex flex-column align-items-center">
  <div class="gl d-flex flex-column align-items-center">
   <svg width="13" height="14" viewBox="0 0 13 14"><path d="M2 3l9 9M11 3l-9 9" stroke="#c9cbd0" stroke-width="2.500"/></svg>
   <svg width="12" height="14" viewBox="0 0 12 14"><path d="M2.500 2v10M1 2.500h3M1 11.500h3M3 7h5" stroke="#c9cbd0" stroke-width="1.500"/><path d="M6 4l5 3-5 3z" fill="#c9cbd0"/></svg>
   <svg width="13" height="13" viewBox="0 0 13 13"><use href="#gearsm"/></svg>
  </div>
  <div class="nm">LAYER PROPERTIES MANAGER</div>
  <svg width="20" height="20" viewBox="0 0 20 20"><use href="#stack"/><path d="M10 7h10v13H10z" fill="#f2f2f2"/><path d="M12 9h6v4h-6z" fill="#6fc0fb" stroke="#333b48"/><path d="M12 17h6" stroke="#777"/></svg>
 </aside>
 <aside class="dock dock-b position-absolute d-flex flex-column align-items-center">
  <div class="gl d-flex flex-column align-items-center">
   <svg width="13" height="14" viewBox="0 0 13 14"><path d="M2 3l9 9M11 3l-9 9" stroke="#c9cbd0" stroke-width="2.500"/></svg>
   <svg width="12" height="14" viewBox="0 0 12 14"><path d="M2.500 2v10M1 2.500h3M1 11.500h3M3 7h5" stroke="#c9cbd0" stroke-width="1.500"/><path d="M6 4l5 3-5 3z" fill="#c9cbd0"/></svg>
   <svg width="13" height="13" viewBox="0 0 13 13"><use href="#gearsm"/></svg>
  </div>
  <div class="nm">PROPERTIES</div>
  <svg width="16" height="20" viewBox="0 0 16 20"><use href="#sheetprop"/></svg>
 </aside>

 <div class="board-ctl position-absolute d-flex align-items-end">
  <svg width="14" height="14" viewBox="0 0 14 14"><path d="M0 9h14v4H0z" fill="#e8e8e8"/></svg>
  <svg width="14" height="14" viewBox="0 0 14 14"><path d="M4 1h9v9" fill="none" stroke="#c9c9c9" stroke-width="1.500"/><path d="M1.500 4.500h8v8h-8z" fill="none" stroke="#f2f2f2" stroke-width="2.500"/></svg>
  <svg width="14" height="14" viewBox="0 0 14 14"><path d="M3 2l8 10M11 2L3 12" stroke="#f2f2f2" stroke-width="2.500"/><path d="M1 1.500h4M9 1.500h4M1 12.500h4M9 12.500h4" stroke="#f2f2f2"/></svg>
 </div>

 <svg class="cube position-absolute" viewBox="1770 265 132 182">
  <circle cx="1836" cy="334" r="55" fill="none" stroke="#444a52" stroke-width="13"/>
  <path d="M1809.500 307.500h53v53h-53z" fill="#b4b5b7" stroke="#8b8d90"/><path d="M1820 318h32v32h-32z" fill="#a3a7b1"/>
  <g font-family="Liberation Sans" font-weight="700" text-anchor="middle" fill="#aeb0b2" font-size="22"><text x="1836" y="285">N</text><text x="1836" y="400">S</text><text x="1779" y="342">W</text><text x="1893" y="342">E</text></g>
  <text x="1836" y="338" text-anchor="middle" font-family="Open Sans" font-weight="700" font-size="12" fill="#4e5259">TOP</text>
  <rect x="1807.500" y="423.500" width="56" height="20" rx="5" fill="#9fa2ae" stroke="#8a8d99"/>
  <text x="1812" y="438" font-family="Liberation Sans" font-size="12" fill="#4e5259">WCS</text>
  <path d="M1848.500 430.500h9l-4.500 5z" fill="#a6a9b4" stroke="#c4c6cd"/>
 </svg>

 <section class="cli position-absolute d-flex">
  <div class="cli-side flex-shrink-0">
   <svg width="22" height="6" viewBox="0 0 22 6"><path d="M0 1h22M0 5h22" stroke="#c9cbd0" stroke-width="2" stroke-dasharray="2 2"/></svg>
   <svg class="mt-2" width="18" height="14" viewBox="0 0 18 14"><path d="M4 2l10 11M14 2L4 13" stroke="#c9cbd0" stroke-width="2"/></svg>
   <svg class="mt-3" width="20" height="20" viewBox="0 0 20 20"><path d="M2 18L13 7" stroke="#c9cbd0" stroke-width="3"/><path d="M17 2l-3 3 1 2 2 .5L20 5q0 6-6 6-4-1-4-5 1-5 7-4z" fill="#c9cbd0"/></svg>
  </div>
  <div class="flex-grow-1 cli-text">
   <div class="cli-log">Command: LTS<br>LTSCALE Enter new linetype scale factor &lt;1.0000&gt;: 0.1<br>Regenerating model.</div>
   <div class="cli-in d-flex align-items-center">
    <svg width="20" height="16" viewBox="0 0 20 16"><path d="M.5 .5h19v15H.5z" fill="#b0b1b3" stroke="#707276"/><path d="M0 0h20v4H0z" fill="#58595c"/><path d="M2 6l3 2.500L2 11M6 11.500h5" fill="none" stroke="#444"/></svg>
    <svg class="ms-1" width="10" height="6" viewBox="0 0 10 6"><path d="M0 0h10L5 6z" fill="#444"/></svg>
    <input class="flex-grow-1" type="text" placeholder="Type a command" aria-label="Command">
    <svg width="10" height="6" viewBox="0 0 10 6"><path d="M0 6h10L5 0z" fill="#444"/></svg>
   </div>
  </div>
 </section>
</main>

<div class="strip"></div>
<nav class="sheet-row d-flex align-items-start" aria-label="Layouts">
 <a href="#" class="sheet-tab d-flex align-items-center justify-content-center text-reset text-decoration-none">Model</a>
 <div class="sheet-part d-flex align-items-center"><a href="#" class="text-reset text-decoration-none">a3</a><span class="slash"></span><svg width="16" height="16" viewBox="0 0 16 16"><path d="M8 0v16M0 8h16" stroke="#dcdcdc" stroke-width="2"/></svg><span class="slash"></span></div>
</nav>

<footer class="status d-flex">
 <div class="seg flex-grow-1 me-1"></div>
 <button class="btn plain seg model">MODEL</button>
 <div class="seg d-flex">
  <span class="st"><svg class="s20" viewBox="0 0 20 20"><path d="M5.500 0v20M10.500 0v20M15.500 0v20M0 5.500h20M0 10.500h20M0 15.500h20" stroke="#dcdcdc"/></svg></span>
  <span class="st"><svg width="16" height="16" viewBox="0 0 16 16"><path d="M1 2h15M1 6h15M1 10h15M1 14h15" stroke="#dcdcdc" stroke-width="2" stroke-dasharray="2 4"/></svg></span>
  <span class="st car"><i class="tri wide"></i></span>
 </div>
 <span class="st seg lone"><svg class="s20" viewBox="0 0 20 20"><path d="M4.500 0v10M0 5.500h9" stroke="#dcdcdc"/><path d="M7.500 11.500h12v6h-12z" fill="#9ba1aa" stroke="#dcdcdc"/><path d="M12 13h7v4h-7z" fill="#fff"/></svg></span>
 <div class="seg d-flex">
  <span class="st"><svg class="s20" viewBox="0 0 20 20"><path d="M.5 0v19.500H20M.5 13.500h6v6" fill="none" stroke="#dcdcdc"/></svg></span>
  <span class="st on"><svg class="s20" viewBox="0 0 20 20"><path d="M14 3a8 8 0 1 0 3 7M9 10.500h11M9 10.500L18 0M13 5q3 3 1 10" fill="none" stroke="#fff"/></svg></span>
  <span class="st car"><i class="tri wide"></i></span>
  <span class="st"><svg class="s20" viewBox="0 0 20 20"><path d="M2 2l16 16" stroke="#d1666a"/><path d="M10.500 0v20" stroke="#62d58c"/><circle cx="10" cy="10" r="2" fill="#3b4453" stroke="#dcdcdc"/></svg></span>
  <span class="st car"><i class="tri wide"></i></span>
 </div>
 <div class="seg d-flex">
  <span class="st"><svg class="s20" viewBox="0 0 20 20"><path d="M16 1L1 18.500" stroke="#dcdcdc"/><path d="M0 18.500h20" stroke="#9ba1aa"/><circle cx="8" cy="10.500" r="2" fill="#dcdcdc"/></svg></span>
  <span class="st on"><svg class="s20" viewBox="0 0 20 20"><path d="M5 3h13.500v16.500H2V5" fill="none" stroke="#fff"/><path d="M.5 .5h5v5h-5z" fill="#5f8fc3" stroke="#fff"/></svg></span>
  <span class="st car"><i class="tri wide"></i></span>
 </div>
 <div class="seg d-flex">
  <span class="st on"><svg class="s20" viewBox="0 0 20 20"><path d="M9 0l3 7 1 6 5 7-6-3H7l-6 3 5-7 1-6z" fill="#fff"/><circle cx="16" cy="5" r="3.500" fill="none" stroke="#fff"/></svg></span>
  <span class="st"><svg class="s20" viewBox="0 0 20 20"><path d="M9 1l3 7 1 5 5 7-6-3H7l-6 3 5-7 1-5z" fill="#cfd1d4"/><path d="M17 0l-4 6h3l-2 4 6-6h-3l2-4z" fill="#dcdcdc"/></svg></span>
  <span class="st"><svg class="s20" viewBox="0 0 20 20"><path d="M10 0l3 8 1 5 5 7-6-3H7l-6 3 5-7 1-5z" fill="#cfd1d4"/></svg></span>
  <button class="btn plain scale d-flex align-items-center h-100">1:1<i class="tri wide"></i></button>
 </div>
 <div class="seg d-flex">
  <span class="st"><svg class="s20" viewBox="0 0 20 20"><circle cx="10" cy="10" r="5.500" fill="none" stroke="#dcdcdc" stroke-width="4"/><path d="M10 0v4M10 16v4M0 10h4M16 10h4M3 3l3 3M14 14l3 3M17 3l-3 3M6 14l-3 3" stroke="#dcdcdc" stroke-width="3.500"/></svg></span>
  <span class="st car"><i class="tri wide"></i></span>
 </div>
 <span class="st seg lone"><svg class="s20" viewBox="0 0 20 20"><path d="M10 0v20M0 10h20" stroke="#dcdcdc" stroke-width="2"/></svg></span>
 <span class="st seg lone"><svg class="s20" viewBox="0 0 20 20"><path d="M.5 1.500h7v7h-7zM8.500 11l5 8.500h-10z" fill="none" stroke="#dcdcdc"/><circle cx="15.500" cy="9" r="4" fill="none" stroke="#dcdcdc"/></svg></span>
 <span class="seg sliver"></span>
 <div class="seg d-flex">
  <span class="st lone"><svg class="s20" viewBox="0 0 20 20"><path d="M.5 3.500h19v14H.5zM3 15l5-4M17 6l-5 4M3 12v3h4M13 6h4v3" fill="none" stroke="#dcdcdc"/></svg></span>
  <span class="st lone"><svg class="s20" viewBox="0 0 20 20"><path d="M0 2h20M0 10h20M0 18h20" stroke="#dcdcdc" stroke-width="2"/></svg></span>
 </div>
</footer>
<script src="https://cdn.jsdelivr.net/npm/bootstrap@5.3.0/dist/js/bootstrap.bundle.min.js"></script>
</body>
</html>
